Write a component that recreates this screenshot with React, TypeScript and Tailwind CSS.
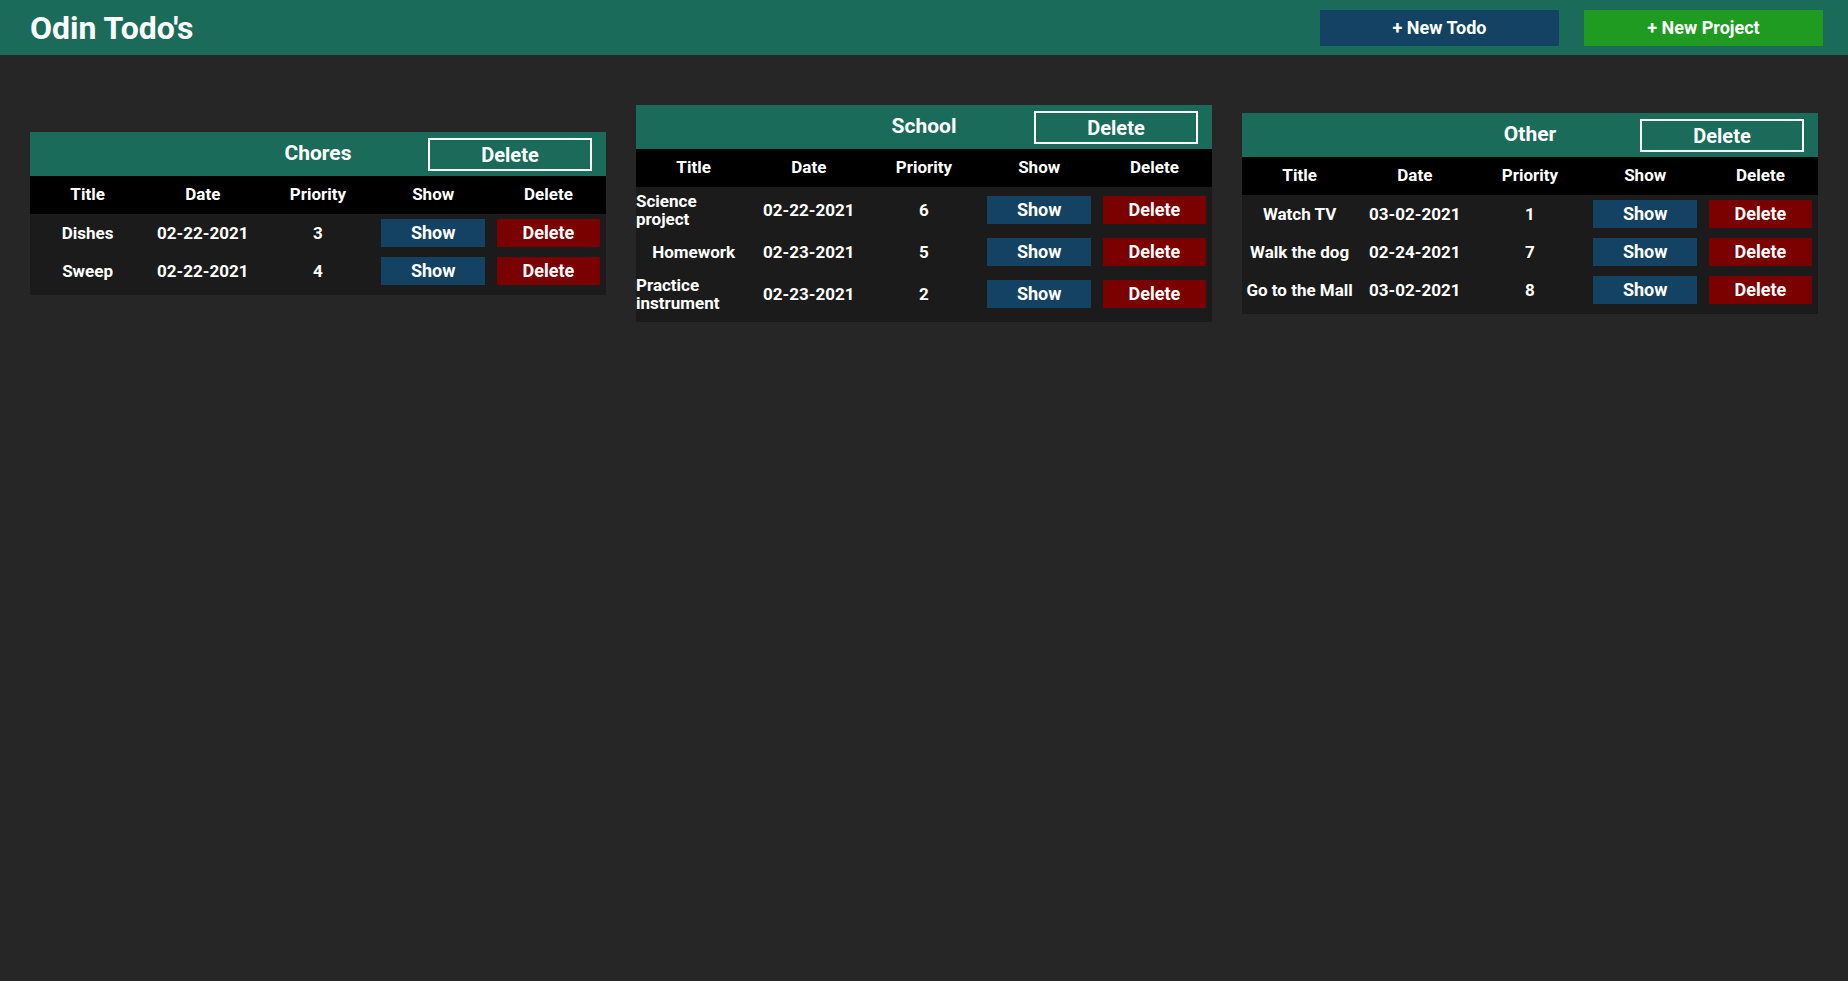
import React from "react";

type Todo = { title: string; date: string; priority: number };
type Project = { name: string; todos: Todo[] };

const projects: Project[] = [
    {
        name: "Chores",
        todos: [
            { title: "Dishes", date: "02-22-2021", priority: 3 },
            { title: "Sweep", date: "02-22-2021", priority: 4 },
        ],
    },
    {
        name: "School",
        todos: [
            { title: "Science project", date: "02-22-2021", priority: 6 },
            { title: "Homework", date: "02-23-2021", priority: 5 },
            { title: "Practice instrument", date: "02-23-2021", priority: 2 },
        ],
    },
    {
        name: "Other",
        todos: [
            { title: "Watch TV", date: "03-02-2021", priority: 1 },
            { title: "Walk the dog", date: "02-24-2021", priority: 7 },
            { title: "Go to the Mall", date: "03-02-2021", priority: 8 },
        ],
    },
];

const columns = ["Title", "Date", "Priority", "Show", "Delete"];

const ProjectTable = ({ project }: { project: Project }) => {
    return (
        <div className="bg-[#1b1b1b] pb-[5px]">
            <div className="grid grid-cols-3 items-center h-[44px] bg-[#1a6b5a]">
                <div />
                <div className="text-center text-[21px] font-bold">{project.name}</div>
                <div className="flex justify-end pr-[14px]">
                    <button className="w-[164px] h-[33px] border-2 border-white text-[20px] font-bold">
                        Delete
                    </button>
                </div>
            </div>
            <div className="grid grid-cols-5 items-center h-[38px] bg-black text-[17px] font-bold">
                {columns.map((c) => (
                    <div key={c} className="text-center">
                        {c}
                    </div>
                ))}
            </div>
            {project.todos.map((t) => (
                <div key={t.title} className="grid grid-cols-5 items-center py-[5px] text-[17px] font-bold leading-[18px]">
                    <div className="flex justify-center items-center">{t.title}</div>
                    <div className="flex justify-center items-center">{t.date}</div>
                    <div className="flex justify-center items-center">{t.priority}</div>
                    <div className="flex justify-center items-center">
                        <button className="w-[90%] h-[28px] bg-[#134263] text-[18px]">Show</button>
                    </div>
                    <div className="flex justify-center items-center">
                        <button className="w-[90%] h-[28px] bg-[#7b0000] text-[18px]">Delete</button>
                    </div>
                </div>
            ))}
        </div>
    );
};

export default function App() {
    return (
        <div className="min-h-screen bg-[#262626] text-white font-['Roboto','Liberation_Sans',sans-serif]">
            <header className="flex items-center justify-between h-[55px] bg-[#1a6b5a] pl-[30px] pr-[25px]">
                <h1 className="text-[32px] font-bold">Odin Todo's</h1>
                <div className="flex gap-[25px]">
                    <button className="w-[239px] h-[36px] bg-[#134263] text-[18px] font-bold">+ New Todo</button>
                    <button className="w-[239px] h-[36px] bg-[#1f9b22] text-[18px] font-bold">+ New Project</button>
                </div>
            </header>

            <div className="grid grid-cols-3 items-center gap-[30px] px-[30px] mt-[50px]">
                {projects.map((p) => (
                    <ProjectTable key={p.name} project={p} />
                ))}
            </div>
        </div>
    );
}
